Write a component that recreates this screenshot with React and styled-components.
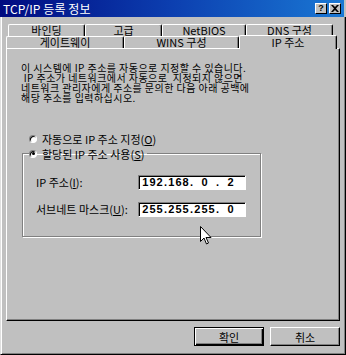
import styled, { createGlobalStyle } from "styled-components"

const GlobalStyle = createGlobalStyle`
  body {
    margin: 0;
    background: #c0c0c0;
  }
  * { box-sizing: border-box; }
`

const FONT = `"Noto Sans CJK KR", "Liberation Sans", sans-serif`

const backTabs = [
  { label: "바인딩", width: 77 },
  { label: "고급", width: 77 },
  { label: "NetBIOS", width: 84 },
  { label: "DNS 구성", width: 87 },
]

const frontTabs = [
  { label: "게이트웨이", width: 118 },
  { label: "WINS 구성", width: 115 },
  { label: "IP 주소", width: 98, active: true },
]

const description = [
  "이 시스템에 IP 주소를 자동으로 지정할 수 있습니다.",
  " IP 주소가 네트워크에서 자동으로  지정되지 않으면",
  "네트워크 관리자에게 주소를 문의한 다음 아래 공백에",
  "해당 주소를 입력하십시오.",
]

function IpInput({ octets }) {
  return (
    <Field>
      {octets.map((o, i) => (
        <Octet key={i}>
          <OctetText>{o}</OctetText>
          {i < 3 && <Dot>.</Dot>}
        </Octet>
      ))}
    </Field>
  )
}

function App() {
  return (
    <Window>
      <GlobalStyle />
      <TitleBar>
        <Title>TCP/IP 등록 정보</Title>
        <TitleButtons>
          <TitleButton>?</TitleButton>
          <TitleButton>
            <svg width="8" height="7" viewBox="0 0 8 7">
              <path d="M0 0h2l2 2 2-2h2L5 3.5 8 7H6L4 5 2 7H0l3-3.5z" fill="#000" />
            </svg>
          </TitleButton>
        </TitleButtons>
      </TitleBar>
      <Body>
        <TabStrip>
          <TabRow indent={2}>
            {backTabs.map(t => (
              <Tab key={t.label} style={{ width: t.width }}>{t.label}</Tab>
            ))}
          </TabRow>
          <TabRow indent={0}>
            {frontTabs.map(t => (
              <Tab key={t.label} active={t.active} style={{ width: t.width }}>{t.label}</Tab>
            ))}
          </TabRow>
        </TabStrip>
        <Panel>
          <Description>
            {description.map((line, i) => <Line key={i}>{line}</Line>)}
          </Description>
          <RadioRow>
            <Radio />
            <span>자동으로 IP 주소 지정(<U>O</U>)</span>
          </RadioRow>
          <Group>
            <Legend>
              <Radio checked />
              <span>할당된 IP 주소 사용(<U>S</U>)</span>
            </Legend>
            <FieldGrid>
              <FieldLabel>IP 주소(<U>I</U>):</FieldLabel>
              <IpInput octets={["192", "168", "0", "2"]} />
              <FieldLabel>서브네트 마스크(<U>U</U>):</FieldLabel>
              <IpInput octets={["255", "255", "255", "0"]} />
            </FieldGrid>
          </Group>
          <Cursor width="12" height="19" viewBox="0 0 12 19">
            <path d="M0.5 0.5v15l3.5-3.5 2.5 6 2-1-2.5-5.5h5z" fill="#fff" stroke="#000" strokeWidth="1" />
          </Cursor>
        </Panel>
        <ButtonRow>
          <PushButton isDefault>확인</PushButton>
          <PushButton>취소</PushButton>
        </ButtonRow>
      </Body>
    </Window>
  )
}

const Window = styled.div`
  width: 346px;
  height: 355px;
  display: flex;
  flex-direction: column;
  background: #c0c0c0;
  font-family: ${FONT};
  color: #000;
  overflow: hidden;
`

const TitleBar = styled.div`
  height: 17px;
  margin-right: 2px;
  display: flex;
  align-items: center;
  justify-content: space-between;
  padding: 0 3px 0 3px;
  background: linear-gradient(to right, #000a80, #0c3fb0 50%, #1a78d4);
`

const Title = styled.span`
  color: #fff;
  font-size: 12px;
  line-height: 17px;
  letter-spacing: 0.1px;
`

const TitleButtons = styled.div`
  display: flex;
  gap: 2px;
`

const TitleButton = styled.div`
  width: 12px;
  height: 11px;
  display: flex;
  align-items: center;
  justify-content: center;
  background: #c0c0c0;
  border: 1px solid;
  border-color: #fff #000 #000 #fff;
  font: bold 9px "Liberation Sans", sans-serif;
  line-height: 9px;
`

const Body = styled.div`
  flex: 1;
  display: flex;
  flex-direction: column;
  padding: 7px 5px 7px 5px;
  border-left: 1px solid #dfdfdf;
  border-right: 1px solid #000;
  border-bottom: 1px solid #000;
  box-shadow: inset 1px 0 #fff, inset -1px -1px #808080;
`

const TabStrip = styled.div`
  display: flex;
  flex-direction: column;
  position: relative;
  z-index: 1;
`

const TabRow = styled.div`
  display: flex;
  height: 12px;
  margin-left: ${p => p.indent}px;
  align-items: flex-end;
`

const Tab = styled.div`
  height: ${p => (p.active ? "14px" : "12px")};
  margin-bottom: ${p => (p.active ? "-1px" : "0")};
  background: #c0c0c0;
  border-top: 1px solid #fff;
  border-left: 1px solid #fff;
  border-right: 1px solid #000;
  box-shadow: inset -1px 0 #808080;
  border-radius: 2px 2px 0 0;
  font-size: 11px;
  line-height: 11px;
  text-align: center;
  padding-top: ${p => (p.active ? "1px" : "0")};
  white-space: nowrap;
`

const Panel = styled.div`
  position: relative;
  height: 273px;
  padding: 14px 14px;
  border-top: 1px solid #fff;
  border-left: 1px solid #fff;
  border-right: 1px solid #000;
  border-bottom: 1px solid #000;
  box-shadow: inset -1px -1px #808080;
  font-size: 11px;
`

const Description = styled.div`
  display: flex;
  flex-direction: column;
  font-size: 10px;
  letter-spacing: 0.45px;
`

const Line = styled.div`
  height: 10px;
  line-height: 10px;
  white-space: pre;
`

const RadioRow = styled.div`
  display: flex;
  align-items: center;
  gap: 5px;
  height: 15px;
  margin: 28px 0 0 8px;
`

const Radio = styled.span`
  width: 8px;
  height: 8px;
  border-radius: 50%;
  background: #fff;
  border: 1px solid;
  border-color: #808080 #fff #fff #808080;
  box-shadow: inset 1px 1px #000;
  display: inline-flex;
  align-items: center;
  justify-content: center;
  flex-shrink: 0;

  &::after {
    content: "";
    width: 3px;
    height: 3px;
    border-radius: 50%;
    background: ${p => (p.checked ? "#000" : "transparent")};
  }
`

const U = styled.span`
  text-decoration: underline;
`

const Group = styled.fieldset`
  width: 239px;
  margin: 0 0 0 1px;
  padding: 13px 14px 19px 13px;
  border: 1px solid #808080;
  box-shadow: inset 1px 1px #fff, 1px 1px #fff;
`

const Legend = styled.legend`
  display: flex;
  align-items: center;
  gap: 5px;
  padding: 0 3px 0 0;
  margin-left: -7px;
  height: 15px;
`

const FieldGrid = styled.div`
  display: grid;
  grid-template-columns: 102px 108px;
  row-gap: 11px;
  align-items: center;
`

const FieldLabel = styled.span`
  white-space: nowrap;
`

const Field = styled.div`
  height: 15px;
  display: flex;
  align-items: center;
  padding-left: 3px;
  background: #fff;
  border: 1px solid;
  border-color: #808080 #fff #fff #808080;
  box-shadow: inset 1px 1px #000;
  font: 11px "Liberation Sans", sans-serif;
  font-weight: bold;
`

const Octet = styled.span`
  display: flex;
`

const OctetText = styled.span`
  width: 22px;
  text-align: center;
  letter-spacing: 1px;
`

const Dot = styled.span`
  width: 4px;
`

const Cursor = styled.svg`
  position: absolute;
  left: 193px;
  top: 177px;
`

const ButtonRow = styled.div`
  display: flex;
  justify-content: flex-end;
  gap: 6px;
  margin-top: 6px;
`

const PushButton = styled.div`
  width: 70px;
  height: 19px;
  display: flex;
  align-items: center;
  justify-content: center;
  font-size: 11px;
  border: 1px solid;
  border-color: ${p => (p.isDefault ? "#000" : "#fff #000 #000 #fff")};
  box-shadow: ${p =>
    p.isDefault
      ? "inset 1px 1px #fff, inset -1px -1px #000, inset -2px -2px #808080"
      : "inset -1px -1px #808080"};
`

export default App
